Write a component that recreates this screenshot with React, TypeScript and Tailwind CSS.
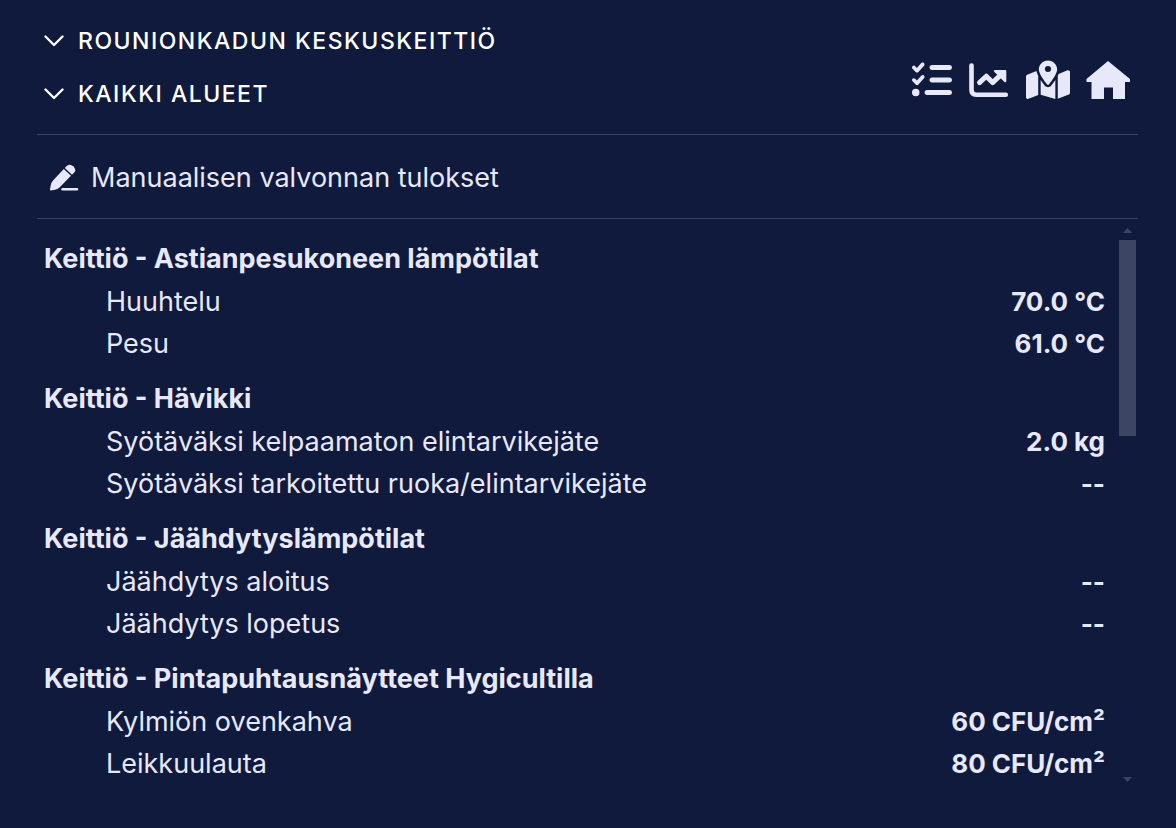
import { ReactNode } from "react";
import { FaListCheck, FaMapLocationDot } from "react-icons/fa6";

type Row = { label: string; value: string };
type Group = { title: string; rows: Row[] };

const groups: Group[] = [
  {
    title: "Keittiö - Astianpesukoneen lämpötilat",
    rows: [
      { label: "Huuhtelu", value: "70.0 °C" },
      { label: "Pesu", value: "61.0 °C" },
    ],
  },
  {
    title: "Keittiö - Hävikki",
    rows: [
      { label: "Syötäväksi kelpaamaton elintarvikejäte", value: "2.0 kg" },
      { label: "Syötäväksi tarkoitettu ruoka/elintarvikejäte", value: "--" },
    ],
  },
  {
    title: "Keittiö - Jäähdytyslämpötilat",
    rows: [
      { label: "Jäähdytys aloitus", value: "--" },
      { label: "Jäähdytys lopetus", value: "--" },
    ],
  },
  {
    title: "Keittiö - Pintapuhtausnäytteet Hygicultilla",
    rows: [
      { label: "Kylmiön ovenkahva", value: "60 CFU/cm²" },
      { label: "Leikkuulauta", value: "80 CFU/cm²" },
    ],
  },
];

function ChartIcon() {
  return (
    <svg width="42" height="36" viewBox="0 0 42 36" fill="none" stroke="currentColor" strokeLinecap="round" strokeLinejoin="round" aria-hidden="true">
      <path d="M3.500 3.500V28Q3.500 32.700 8.200 32.700H37.800" strokeWidth="4.600" />
      <path d="M11.500 20.600L18.300 14.200L24.600 20.600L32 13.600" strokeWidth="5" />
      <path d="M27 9H37.200V19.200Z" fill="currentColor" strokeWidth="2.200" />
    </svg>
  );
}

function HomeIcon() {
  return (
    <svg width="44" height="40" viewBox="0 0 44 40" fill="currentColor" aria-hidden="true">
      <path d="M22 1L44 19V22H39V39H27V27.500H18V39H5.500V22H0.500V19Z" />
    </svg>
  );
}

function PencilIcon() {
  return (
    <svg width="30" height="28" viewBox="0 0 30 28" fill="currentColor" aria-hidden="true">
      <path d="M14.800 4.900L22 11.800L10.500 23.500Q8.500 25.400 6 25.800L2 26.500Q0.700 26.700 1 25.300L1.800 21Q2.200 18.500 4 16.400Z" />
      <path d="M15.800 3.900L18 1.800Q21 -0.500 24.200 2.300Q27.800 5.800 25.200 8.600L23 10.800Z" />
      <path d="M13.500 25.200H28" stroke="currentColor" strokeWidth="2.400" strokeLinecap="round" />
    </svg>
  );
}

function Chevron() {
  return (
    <svg width="20" height="12" viewBox="0 0 20 12" fill="none" stroke="currentColor" strokeWidth="2.400" strokeLinecap="round" strokeLinejoin="round" aria-hidden="true">
      <path d="M1.500 1.500L10 10L18.500 1.500" />
    </svg>
  );
}

function Picker({ children }: { children: ReactNode }) {
  return (
    <button type="button" className="flex items-center gap-3.5 text-left text-[23px] leading-8 font-medium tracking-[1.5px] text-white uppercase">
      <Chevron />
      {children}
    </button>
  );
}

function ScrollRail() {
  return (
    <div aria-hidden="true" className="flex w-[17px] shrink-0 flex-col items-center text-[#3d4564]">
      <svg width="9" height="5" viewBox="0 0 9 5" className="mt-[5px] mb-[7px] shrink-0" fill="currentColor">
        <path d="M0 5L4.500 0L9 5Z" />
      </svg>
      <div className="w-full grow">
        <div className="h-[37%] w-full bg-[#3d4564]" />
      </div>
      <svg width="9" height="5" viewBox="0 0 9 5" className="mt-[7px] mb-[3px] shrink-0" fill="currentColor">
        <path d="M0 0L4.500 5L9 0Z" />
      </svg>
    </div>
  );
}

export default function App() {
  return (
    <main className="min-h-screen bg-[#101a3d] pt-[25px] pr-[38px] pb-10 pl-[37px] font-[Inter,sans-serif] text-[#e8e8fb]">
      <header className="flex items-center justify-between border-b border-[#34427a] pr-2 pb-6 pl-[7px]">
        <div className="flex flex-col gap-[21px]">
          <Picker>Rounionkadun keskuskeittiö</Picker>
          <Picker>Kaikki alueet</Picker>
        </div>
        <nav aria-label="Näkymät" className="mt-[25px] flex items-center gap-4">
          <button type="button" aria-label="Tehtävät"><FaListCheck size={40} /></button>
          <button type="button" aria-label="Kuvaajat"><ChartIcon /></button>
          <button type="button" aria-label="Kartta"><FaMapLocationDot size={44} /></button>
          <button type="button" aria-label="Etusivu"><HomeIcon /></button>
        </nav>
      </header>
      <div className="flex h-[84px] items-center gap-3 border-b border-[#34427a] pt-0.5 pl-3">
        <PencilIcon />
        <h1 className="text-[27px] leading-8">Manuaalisen valvonnan tulokset</h1>
      </div>
      <section className="mt-1 flex pr-0.5">
        <div className="grow pt-[15px] pr-3.5 pl-[7px] text-[27px] leading-[42px]">
          {groups.map((group) => (
            <table key={group.title} className="mb-[13px] w-full last:mb-0">
              <caption className="pb-px text-left font-bold">{group.title}</caption>
              <tbody>
                {group.rows.map((row) => (
                  <tr key={row.label}>
                    <th scope="row" className="pl-[62px] text-left font-normal">{row.label}</th>
                    <td className="text-right text-[26px] leading-[42px] font-bold">{row.value}</td>
                  </tr>
                ))}
              </tbody>
            </table>
          ))}
        </div>
        <ScrollRail />
      </section>
    </main>
  );
}
